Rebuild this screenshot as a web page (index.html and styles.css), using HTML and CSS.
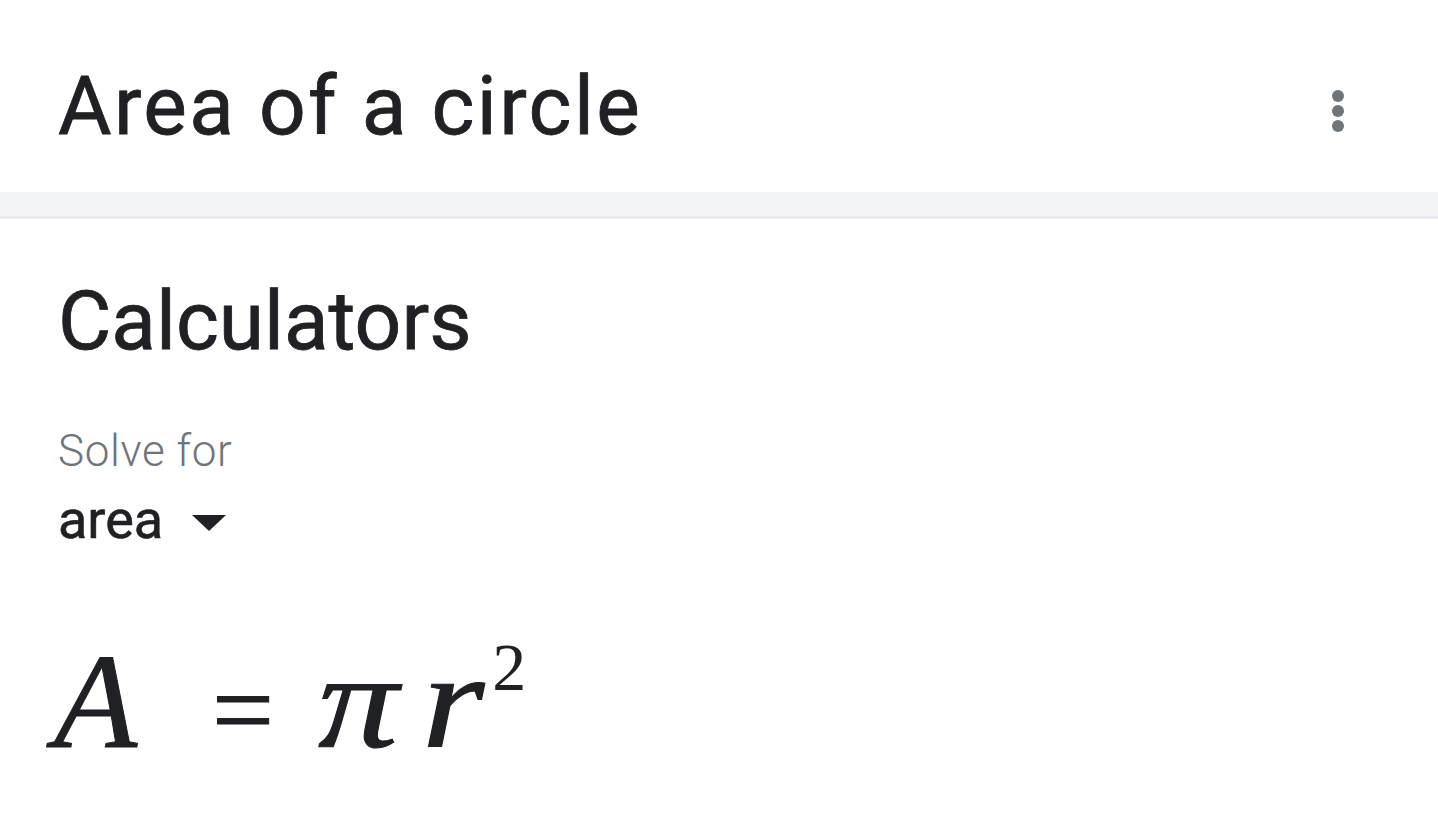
FILE: index.html
```html
<!DOCTYPE html>
<html lang="en">
<head>
    <meta charset="UTF-8">
    <meta name="viewport" content="width=device-width, initial-scale=1.0">
    <title>Area of a circle</title>
    <link rel="stylesheet" href="styles.css">
</head>
<body>

<div class="header">
    <h1 class="title">Area of a circle</h1>
    <button class="menu" aria-label="More options">
        <svg width="24" height="50" viewBox="0 0 24 50">
            <circle cx="12" cy="7" r="6"/>
            <circle cx="12" cy="22" r="6"/>
            <circle cx="12" cy="37" r="6"/>
        </svg>
    </button>
</div>

<div class="divider"></div>

<div class="section">
    <h2 class="section-title">Calculators</h2>

    <div class="solve">
        <div class="solve-label">Solve for</div>
        <div class="solve-select">
            <span>area</span>
            <svg class="caret" width="34" height="16" viewBox="0 0 34 16">
                <path d="M0 0 L34 0 L17 16 Z"/>
            </svg>
        </div>
    </div>

    <div class="formula">
        <span class="var">A</span>
        <span class="eq">=</span>
        <span class="var wide pi">π</span>
        <span class="var wide r">r</span>
        <sup>2</sup>
    </div>
</div>

</body>
</html>
```

FILE: styles.css
```css
body {
    margin: 0;
    background-color: #ffffff;
    font-family: Roboto, Arial, sans-serif;
    color: #202124;
}

.header {
    display: flex;
    align-items: center;
    justify-content: space-between;
    height: 192px;
    padding: 0 88px 0 58px;
}

.title {
    margin: 0;
    padding-top: 20px;
    font-size: 82px;
    font-weight: 400;
    letter-spacing: 2.4px;
    -webkit-text-stroke: 0.8px #202124;
}

.menu {
    background: none;
    border: none;
    padding: 0;
    margin-top: 38px;
    fill: #70757a;
    cursor: pointer;
}

.divider {
    height: 24px;
    background-color: #f1f3f4;
    border-bottom: 3px solid #e8eaed;
}

.section {
    padding: 0 58px;
}

.section-title {
    margin: 0;
    padding-top: 54px;
    font-size: 82px;
    font-weight: 400;
    line-height: 96px;
    -webkit-text-stroke: 0.8px #202124;
}

.solve {
    margin-top: 54px;
}

.solve-label {
    font-size: 44px;
    font-weight: 300;
    letter-spacing: 0.6px;
    color: #70757a;
    line-height: 56px;
}

.solve-select {
    display: flex;
    align-items: center;
    gap: 29px;
    font-size: 54px;
    font-weight: 400;
    line-height: 62px;
    margin-top: 10px;
    -webkit-text-stroke: 0.6px #202124;
}

.caret {
    fill: #202124;
    margin-top: 6px;
}

.formula {
    display: flex;
    align-items: baseline;
    margin-top: 80px;
    margin-left: -4px;
    font-family: "Liberation Serif", "DejaVu Serif", serif;
    font-size: 136px;
    line-height: 140px;
    -webkit-text-stroke: 1px #202124;
}

.var {
    font-style: italic;
}

.wide {
    display: inline-block;
    transform: scaleX(1.18);
    transform-origin: left bottom;
}

.eq {
    margin: 0 44px 0 75px;
    font-size: 110px;
}

.pi {
    margin-right: 36px;
}

.r {
    margin-right: 17px;
}

.formula sup {
    font-size: 68px;
    line-height: 1;
    position: relative;
    top: -57px;
    -webkit-text-stroke: 0;
}
```
